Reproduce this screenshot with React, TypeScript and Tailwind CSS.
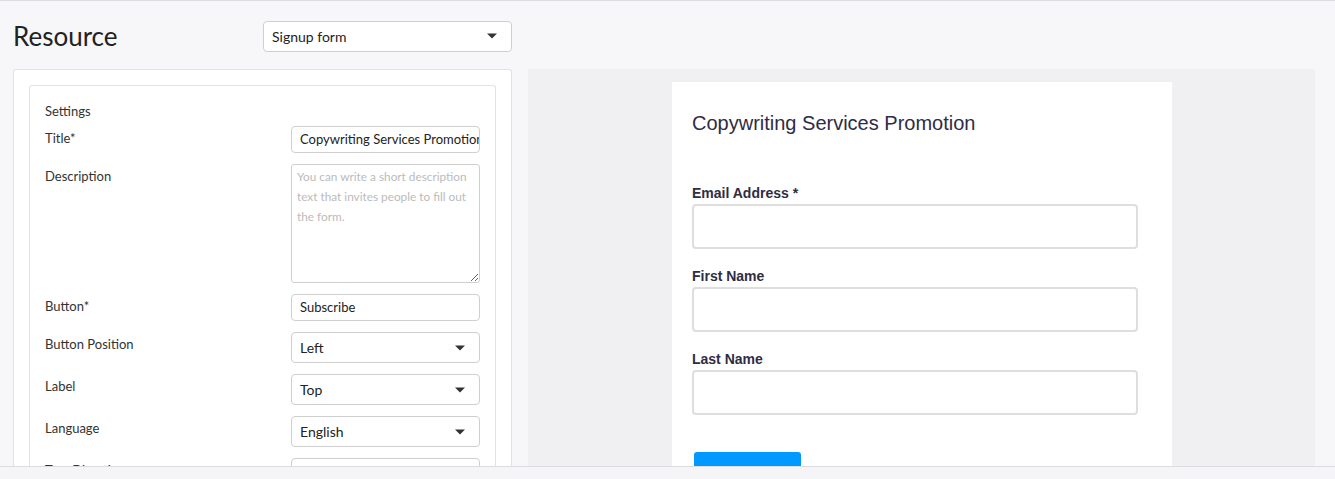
import React from 'react';

const sans = { fontFamily: 'Lato, "Open Sans", sans-serif' };

function Caret() {
  return (
    <svg width="10" height="6" viewBox="0 0 10 6" className="shrink-0">
      <path d="M0 0.5 L10 0.5 L5 5.5 Z" fill="#333" />
    </svg>
  );
}

function SelectBox({ value, className = '' }: { value: string; className?: string }) {
  return (
    <div
      className={`flex items-center justify-between rounded-[4px] border border-[#cfcfcf] bg-white pl-[8px] pr-[14px] text-[14px] text-[#222] ${className}`}
    >
      <span>{value}</span>
      <Caret />
    </div>
  );
}

function Row({ label, children }: { label: string; children: React.ReactNode }) {
  return (
    <div className="flex">
      <div className="w-[246px] shrink-0 pt-[2px] text-[13px] leading-[20px] text-[#333]">{label}</div>
      <div className="w-[189px] shrink-0">{children}</div>
    </div>
  );
}

function TextBox({ value }: { value: string }) {
  return (
    <div className="flex h-[27px] items-center overflow-hidden whitespace-nowrap rounded-[4px] border border-[#cfcfcf] bg-white px-[8px] text-[13px] text-[#222]">
      {value}
    </div>
  );
}

function FormField({ label }: { label: string }) {
  return (
    <div className="flex flex-col">
      <div className="text-[14px] font-bold leading-[18px] text-[#2f2c44]">{label}</div>
      <div className="mt-[2px] h-[45px] w-[446px] rounded-[4px] border-2 border-[#dedede] bg-white" />
    </div>
  );
}

export default function App() {
  return (
    <div className="flex h-[479px] w-[1335px] flex-col overflow-hidden border-t border-[#dcdce2] bg-[#f7f7f9]" style={sans}>
      <div className="flex-1 overflow-hidden px-[13px]">
        {/* header */}
        <div className="flex items-center pt-[19px]">
          <h1 className="w-[250px] text-[26px] leading-[32px] text-[#222]">Resource</h1>
          <SelectBox value="Signup form" className="h-[31px] w-[249px]" />
        </div>

        <div className="mt-[17px] flex gap-[16px]">
          {/* left settings card */}
          <div className="w-[499px] shrink-0 rounded-t-[3px] border border-b-0 border-[#e2e2e2] bg-white p-[15px] pb-0">
            <div className="rounded-t-[3px] border border-b-0 border-[#e2e2e2] px-[15px] pt-[15px]">
              <div className="text-[13px] leading-[20px] text-[#333]">Settings</div>
              <div className="mt-[5px] flex flex-col gap-[11px]">
                <Row label="Title*">
                  <TextBox value="Copywriting Services Promotion" />
                </Row>
                <Row label="Description">
                  <textarea
                    readOnly
                    placeholder="You can write a short description text that invites people to fill out the form."
                    className="block h-[119px] w-full resize-y rounded-[3px] border border-[#cfcfcf] bg-white py-[2px] pl-[5px] pr-[1px] text-[11.8px] leading-[20px] text-[#222] placeholder:text-[#bbb] outline-none"
                  />
                </Row>
                <Row label="Button*">
                  <TextBox value="Subscribe" />
                </Row>
                <Row label="Button Position">
                  <SelectBox value="Left" className="h-[31px]" />
                </Row>
                <Row label="Label">
                  <SelectBox value="Top" className="h-[31px]" />
                </Row>
                <Row label="Language">
                  <SelectBox value="English" className="h-[31px]" />
                </Row>
                <Row label="Text Direction">
                  <SelectBox value="" className="h-[31px]" />
                </Row>
              </div>
            </div>
          </div>

          {/* right preview */}
          <div className="flex h-[420px] w-[787px] shrink-0 bg-[#f0f0f2] pl-[144px] pt-[13px]">
            <div
              className="w-[500px] bg-white px-[20px] pt-[29px]"
              style={{ fontFamily: '"Liberation Sans", Arial, sans-serif' }}
            >
              <div className="text-[20px] leading-[24px] text-[#2f2c44]">Copywriting Services Promotion</div>
              <div className="mt-[49px] flex flex-col gap-[18px]">
                <FormField label="Email Address *" />
                <FormField label="First Name" />
                <FormField label="Last Name" />
              </div>
              <div className="ml-[2px] mt-[37px] h-[40px] w-[107px] rounded-[3px] bg-[#0099ff]" />
            </div>
          </div>
        </div>
      </div>
      <div className="h-[13px] shrink-0 border-t border-[#dcdce0] bg-[#f5f5f7]" />
    </div>
  );
}
